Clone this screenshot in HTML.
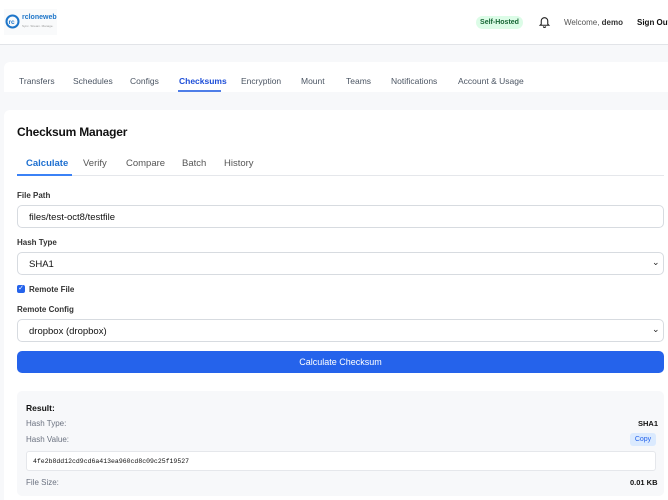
<!DOCTYPE html>
<html><head><style>
*{box-sizing:border-box;margin:0;padding:0}
body{width:668px;height:500px;overflow:hidden;background:#f7f8fa;font-family:"Liberation Sans",sans-serif;position:relative;color:#111}
.a{position:absolute}
.hdr{left:0;top:0;width:668px;height:45px;background:#fff;border-bottom:1px solid #e2e4e8}
.nav{left:4px;top:62px;width:664px;height:30px;background:#fff;border-radius:6px 0 0 0}
.nav span{position:absolute;top:14px;font-size:8.5px;color:#4b5563}
.card{left:4px;top:110px;width:664px;height:390px;background:#fff;border-radius:6px 0 0 0}
.lbl{font-size:8px;font-weight:bold;color:#333}
.inp{left:17px;width:647px;height:23px;border:1px solid #d7dbe0;border-radius:5px;background:#fff;font-size:9.5px;padding:6px 11px;color:#111}
.tab{position:absolute;top:158px;font-size:9.5px;color:#555}
.res{left:17px;top:391px;width:647px;height:105px;background:#f7f8fa;border-radius:5px}
.small{font-size:8px;color:#6b7280}
.chev{left:652px;font-size:9px;color:#222}
</style></head><body>
<div class="a hdr"></div>
<div class="a" style="left:4px;top:9px;width:53px;height:26px;background:#f9fafb"></div>
<svg class="a" style="left:5px;top:14px" width="15" height="15" viewBox="0 0 15 15"><circle cx="7.5" cy="7.5" r="6" fill="none" stroke="#1d75c9" stroke-width="2"/><text x="3.5" y="10" font-size="6.5" font-family="Liberation Sans" fill="#1d75c9" font-weight="bold">rc</text></svg>
<div class="a" style="left:22px;top:14px;font-size:7px;color:#1d75c9;font-weight:bold">rcloneweb</div>
<div class="a" style="left:22px;top:24px;font-size:3px;color:#999">Sync. Stream. Manage.</div>
<div class="a" style="left:476px;top:16px;width:47px;height:13px;border-radius:7px;background:#dcfce7;color:#166534;font-size:7px;font-weight:bold;text-align:center;line-height:13px">Self-Hosted</div>
<svg class="a" style="left:538px;top:15px" width="13" height="14" viewBox="0 0 24 24" fill="none" stroke="#222" stroke-width="2"><path d="M6 16V10a6 6 0 0 1 12 0v6l2 2H4z"/><path d="M10 20a2 2 0 0 0 4 0"/></svg>
<div class="a" style="left:564px;top:18px;font-size:8px;color:#555">Welcome, <b style="color:#333">demo</b></div>
<div class="a" style="left:637px;top:18px;font-size:8px;color:#111;font-weight:bold;white-space:nowrap">Sign Out</div>
<div class="a nav">
<span style="left:15px">Transfers</span><span style="left:69px">Schedules</span><span style="left:126px">Configs</span>
<span style="left:175px;color:#1d4ed8;font-weight:bold">Checksums</span><span style="left:237px">Encryption</span><span style="left:297px">Mount</span><span style="left:342px">Teams</span><span style="left:387px">Notifications</span><span style="left:454px">Account &amp; Usage</span>
<div style="position:absolute;left:174px;top:28px;width:43px;height:2px;background:#4f7ee8"></div>
</div>
<div class="a card"></div>
<div class="a" style="left:17px;top:125px;font-size:12px;color:#111;font-weight:bold;letter-spacing:-0.2px">Checksum Manager</div>
<span class="tab" style="left:26px;color:#1d6fd0;font-weight:bold">Calculate</span>
<span class="tab" style="left:83px">Verify</span>
<span class="tab" style="left:126px">Compare</span>
<span class="tab" style="left:182px">Batch</span>
<span class="tab" style="left:224px">History</span>
<div class="a" style="left:17px;top:175px;width:647px;height:1px;background:#e5e7eb"></div>
<div class="a" style="left:17px;top:174px;width:55px;height:2px;background:#3b82f6"></div>
<div class="a lbl" style="left:17px;top:191px">File Path</div>
<div class="a inp" style="top:205px">files/test-oct8/testfile</div>
<div class="a lbl" style="left:17px;top:238px">Hash Type</div>
<div class="a inp" style="top:252px">SHA1</div>
<div class="a chev" style="top:257px">⌄</div>
<div class="a" style="left:17px;top:285px;width:8px;height:8px;background:#2563eb;border-radius:2px;color:#fff;font-size:7px;line-height:8px;text-align:center">✓</div>
<div class="a lbl" style="left:29px;top:285px">Remote File</div>
<div class="a lbl" style="left:17px;top:305px">Remote Config</div>
<div class="a inp" style="top:319px">dropbox (dropbox)</div>
<div class="a chev" style="top:324px">⌄</div>
<div class="a" style="left:17px;top:351px;width:647px;height:22px;background:#2563eb;border-radius:5px;color:#fff;font-size:9px;text-align:center;line-height:22px">Calculate Checksum</div>
<div class="a res"></div>
<div class="a" style="left:26px;top:403px;font-size:8.5px;font-weight:bold">Result:</div>
<div class="a small" style="left:26px;top:419px">Hash Type:</div>
<div class="a" style="left:638px;top:419px;font-size:7.5px;font-weight:bold">SHA1</div>
<div class="a small" style="left:26px;top:435px">Hash Value:</div>
<div class="a" style="left:630px;top:433px;width:26px;height:13px;background:#dbeafe;border-radius:3px;color:#2563eb;font-size:7px;text-align:center;line-height:13px">Copy</div>
<div class="a" style="left:26px;top:451px;width:630px;height:20px;background:#fff;border:1px solid #e5e7eb;border-radius:3px;font-family:'Liberation Mono',monospace;font-size:6.5px;padding:6px 6px">4fe2b8dd12cd9cd6a413ea960cd8c09c25f19527</div>
<div class="a small" style="left:26px;top:478px">File Size:</div>
<div class="a" style="left:630px;top:478px;font-size:7.5px;font-weight:bold">0.01 KB</div>
</body></html>
